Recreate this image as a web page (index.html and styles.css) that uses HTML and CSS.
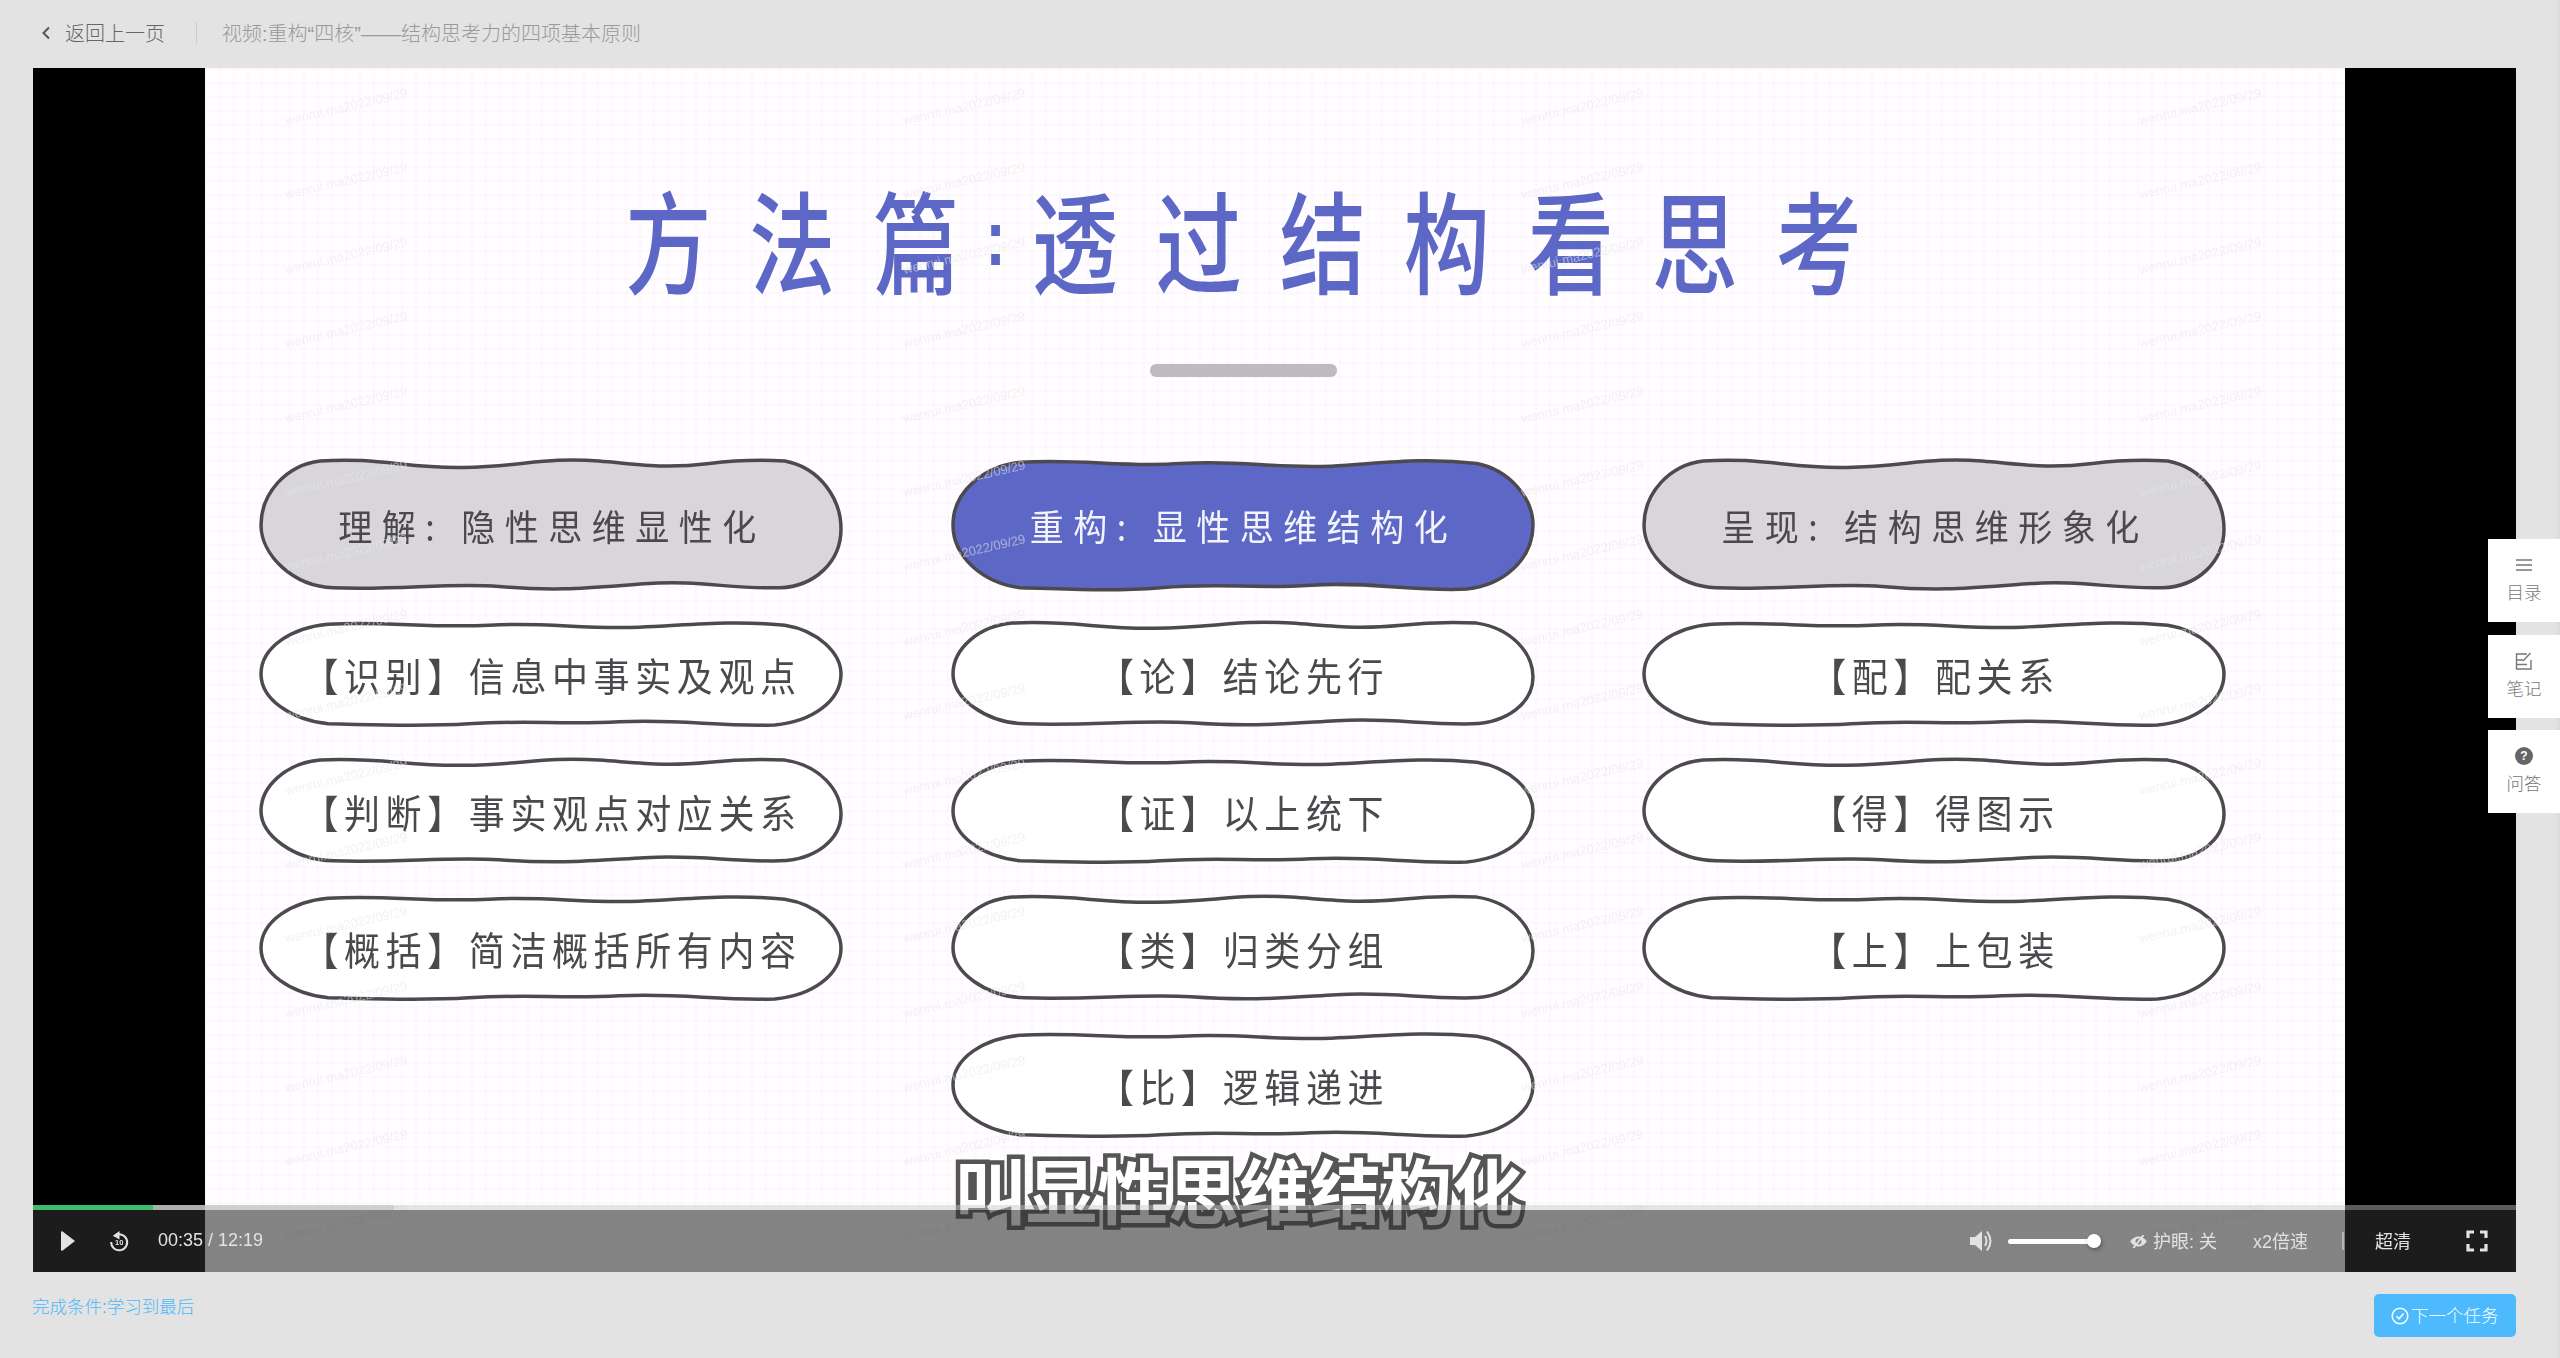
FILE: index.html
```html
<!DOCTYPE html>
<html lang="zh-CN">
<head>
    <meta charset="UTF-8">
    <title>视频:重构“四核”——结构思考力的四项基本原则</title>
    <link rel="stylesheet" href="styles.css">
</head>
<body>
    <svg class="defs" width="0" height="0">
        <symbol id="wave-a" viewBox="0 0 584 104" preserveAspectRatio="none">
            <path class="wave" d="M62 3C120 0 150 9 205 8C265 7 285 0 340 3C385 6 405 9 450 5C480 2 500 2 525 3C560 8 581 32 581 55C581 80 555 99 520 100C470 101 440 94 385 97C330 100 300 103 240 99C190 96 140 102 75 100C35 99 3 75 3 52C3 28 28 6 62 3Z"/>
        </symbol>
        <symbol id="wave-b" viewBox="0 0 584 104" preserveAspectRatio="none">
            <path class="wave" d="M70 4C130 1 170 8 230 5C290 2 320 9 380 7C430 5 470 0 525 5C558 10 581 32 581 52C581 78 552 98 515 101C460 103 420 95 360 98C300 101 270 96 210 100C160 103 120 101 70 100C32 96 3 76 3 52C3 26 34 7 70 4Z"/>
        </symbol>
    </svg>

    <header class="topbar">
        <a class="back">
            <svg class="back-arrow" viewBox="0 0 10 14"><path d="M8 1.5 2.5 7 8 12.5"/></svg>
            返回上一页
        </a>
        <span class="video-title">视频:重构“四核”——结构思考力的四项基本原则</span>
    </header>

    <main class="player">
        <div class="slide">
            <h1 class="slide-title"><span>方</span><span>法</span><span>篇</span><span class="colon">:</span><span>透</span><span>过</span><span>结</span><span>构</span><span>看</span><span>思</span><span>考</span></h1>
            <div class="slide-rule"></div>
            <div class="pills">
                <div class="pill pill-head"><svg><use href="#wave-a"/></svg><span>理解: 隐性思维显性化</span></div>
                <div class="pill pill-head pill-active"><svg><use href="#wave-b"/></svg><span>重构: 显性思维结构化</span></div>
                <div class="pill pill-head"><svg><use href="#wave-a"/></svg><span>呈现: 结构思维形象化</span></div>

                <div class="pill"><svg><use href="#wave-b"/></svg><span>【识别】信息中事实及观点</span></div>
                <div class="pill"><svg><use href="#wave-a"/></svg><span>【论】结论先行</span></div>
                <div class="pill"><svg><use href="#wave-b"/></svg><span>【配】配关系</span></div>

                <div class="pill"><svg><use href="#wave-a"/></svg><span>【判断】事实观点对应关系</span></div>
                <div class="pill"><svg><use href="#wave-b"/></svg><span>【证】以上统下</span></div>
                <div class="pill"><svg><use href="#wave-a"/></svg><span>【得】得图示</span></div>

                <div class="pill"><svg><use href="#wave-b"/></svg><span>【概括】简洁概括所有内容</span></div>
                <div class="pill"><svg><use href="#wave-a"/></svg><span>【类】归类分组</span></div>
                <div class="pill"><svg><use href="#wave-b"/></svg><span>【上】上包装</span></div>

                <div class="pill pill-mid"><svg><use href="#wave-b"/></svg><span>【比】逻辑递进</span></div>
            </div>
            <div class="watermarks" id="watermarks"></div>
            <div class="caption">叫显性思维结构化</div>
        </div>

        <div class="controls">
            <div class="progress">
                <div class="progress-buffer"></div>
                <div class="progress-played"></div>
            </div>
            <div class="ctrl-bar">
                <div class="ctrl-left">
                    <svg class="ic-play" viewBox="0 0 14 20"><path d="M0 1 1 0 14 10 1 20 0 19Z"/></svg>
                    <svg class="ic-replay" viewBox="0 0 20 20">
                        <path class="ic-line" d="M5 5.2A8 8 0 1 1 2.2 11"/>
                        <path d="M10.5 0 4 4.8 10.5 8.4Z"/>
                        <text x="10.2" y="14.4" class="ic-ten">10</text>
                    </svg>
                    <span class="time">00:35 / 12:19</span>
                </div>
                <div class="ctrl-right">
                    <svg class="ic-volume" viewBox="0 0 22 22">
                        <path d="M0 7H5L12 1V21L5 15H0Z"/>
                        <path class="ic-line" d="M15 6Q18 11 15 16"/>
                        <path class="ic-line" d="M17 1.5Q24 11 17 20.5"/>
                    </svg>
                    <div class="volume"><i class="volume-knob"></i></div>
                    <button class="ctrl-item eye">
                        <svg class="ic-eye" viewBox="0 0 18 14">
                            <path d="M0 7Q4 1.5 9 1.5T18 7Q14 12.5 9 12.5T0 7Z"/>
                            <circle class="ic-hole" cx="9" cy="7" r="3.2"/>
                            <path class="ic-cut" d="M14.5 0 3.5 14"/>
                        </svg>
                        护眼: 关
                    </button>
                    <button class="ctrl-item speed">x2倍速</button>
                    <i class="ctrl-sep"></i>
                    <button class="ctrl-item quality">超清</button>
                    <svg class="ic-full" viewBox="0 0 22 22"><path d="M2 8V2H8M14 2H20V8M20 14V20H14M8 20H2V14"/></svg>
                </div>
            </div>
        </div>
    </main>

    <footer class="foot">
        <span class="condition">完成条件:学习到最后</span>
        <button class="next">
            <svg class="ic-check" viewBox="0 0 18 18"><circle cx="9" cy="9" r="7.8"/><path d="M5.5 9.2 8 11.8 12.6 6.4"/></svg>
            下一个任务
        </button>
    </footer>

    <aside class="side">
        <a class="side-tab">
            <svg class="side-ic" viewBox="0 0 18 18"><path class="side-line" d="M1 4H17M1 9H17M1 14H17"/></svg>
            目录
        </a>
        <a class="side-tab">
            <svg class="side-ic" viewBox="0 0 18 18"><path class="side-line" d="M12 2H1.5V17H16V8M1.5 8H8M1.5 12.5H12M8 9 15.5 1"/></svg>
            笔记
        </a>
        <a class="side-tab">
            <svg class="side-ic" viewBox="0 0 18 18"><circle cx="9" cy="9" r="9"/><text x="9" y="13.2" class="side-q">?</text></svg>
            问答
        </a>
    </aside>

    <script>
        // the user's watermark is repeated over the whole video
        const marks = document.getElementById('watermarks');
        for (let i = 0; i < 64; i++) {
            const mark = document.createElement('span');
            mark.textContent = 'wenrui.ma2022/09/29';
            marks.appendChild(mark);
        }
    </script>
</body>
</html>
```

FILE: styles.css
```css
* {
    box-sizing: border-box;
}

html, body {
    margin: 0;
    height: 100%;
}

body {
    background-color: #e3e3e3;
    font-family: "Liberation Sans", "Noto Sans CJK SC", sans-serif;
    font-weight: 300;
    padding: 0 44px 0 33px;
    overflow: hidden;
    position: relative;
}

/* faint shade along the right edge of the window */
body::before {
    content: "";
    position: absolute;
    right: 0;
    top: 0;
    bottom: 0;
    width: 5px;
    background: linear-gradient(90deg, rgba(0, 0, 0, 0), rgba(0, 0, 0, 0.04));
}

.defs {
    position: absolute;
}

.wave {
    vector-effect: non-scaling-stroke;
}

/* top bar */
.topbar {
    height: 68px;
    display: flex;
    align-items: center;
    font-size: 20px;
    padding-bottom: 3px;
}

.back {
    display: flex;
    align-items: center;
    color: #666;
    padding-left: 8px;
    padding-right: 31px;
    border-right: 1px solid #ccc;
    height: 22px;
}

.back-arrow {
    width: 10px;
    height: 14px;
    margin-right: 14px;
    fill: none;
    stroke: #555;
    stroke-width: 2;
}

.video-title {
    color: #999;
    margin-left: 25px;
}

/* player */
.player {
    position: relative;
    height: 1204px;
    background-color: #000;
    padding: 0 171px 0 172px;
}

.slide {
    position: relative;
    height: 100%;
    padding: 110px 118px 0 55px;
    overflow: hidden;
    background-color: #fffdff;
    background-image:
        linear-gradient(rgba(240, 226, 240, 0.16) 2px, transparent 2px),
        linear-gradient(90deg, rgba(240, 226, 240, 0.16) 2px, transparent 2px);
    background-size: 14px 14px;
}

.slide-title {
    margin: 0;
    height: 120px;
    display: flex;
    justify-content: center;
    align-items: center;
    gap: 38px;
    font-family: "Noto Sans CJK SC", sans-serif;
    font-size: 86px;
    font-weight: 500;
    line-height: 120px;
    color: #5d68c6;
    filter: blur(0.7px);
}

.slide-title span {
    display: block;
    transform: scaleY(1.3);
}

.slide-title .colon {
    font-family: "Liberation Sans", sans-serif;
    font-weight: 700;
    font-size: 62px;
    margin: 0 -12px;
}

.slide-rule {
    width: 187px;
    height: 13px;
    margin: 66px auto 0;
    background-color: #bdbbbd;
    border-radius: 6px;
    filter: blur(0.7px);
}

.pills {
    margin-top: 82px;
    display: grid;
    grid-template-columns: repeat(3, 584px);
    grid-template-rows: 130px repeat(4, 104px);
    column-gap: 107.5px;
    row-gap: 33px;
    filter: blur(0.5px);
}

.pill {
    position: relative;
    height: 104px;
    display: flex;
    align-items: center;
    justify-content: center;
    fill: #fff;
    stroke: #4d4a4f;
    stroke-width: 3.5;
    font-family: "Noto Sans CJK SC", sans-serif;
    font-size: 36px;
    font-weight: 400;
    letter-spacing: 5.6px;
    color: #4b494d;
}

.pill svg {
    position: absolute;
    left: -2px;
    top: -2px;
    width: calc(100% + 2px);
    height: calc(100% + 4px);
}

.pill span {
    position: relative;
    transform: scaleY(1.08);
}

.pill-head {
    height: 132px;
    fill: #d8d6d9;
    font-size: 34px;
    letter-spacing: 9.5px;
}

.pill-active {
    fill: #5d68c6;
    color: #f3f3fb;
}

.pill-mid {
    grid-column: 2;
}

.watermarks {
    position: absolute;
    left: 0;
    top: 0;
    width: 100%;
    height: 100%;
    padding: 45px 0 0 82px;
    display: grid;
    grid-template-columns: repeat(4, 618px);
    grid-auto-rows: 74.4px;
    filter: blur(0.4px);
}

.watermarks span {
    display: block;
    height: 15px;
    font: 13px/15px "Liberation Sans", sans-serif;
    white-space: nowrap;
    color: rgba(232, 232, 232, 0.55);
    transform: rotate(-13deg);
    transform-origin: 0 100%;
}

.caption {
    position: absolute;
    left: 750px;
    top: 1074px;
    font-family: "Noto Sans CJK SC", sans-serif;
    font-size: 71px;
    font-weight: 700;
    line-height: 90px;
    white-space: nowrap;
    color: #fff;
    -webkit-text-stroke: 9px #555;
    paint-order: stroke fill;
    filter: blur(0.5px);
}

/* controls, they lie over the video */
.controls {
    position: absolute;
    left: 0;
    right: 0;
    bottom: 0;
}

.progress {
    position: relative;
    height: 5px;
    background-color: rgba(198, 198, 198, 0.46);
}

.progress-buffer {
    position: absolute;
    left: 0;
    top: 0;
    bottom: 0;
    width: 361px;
    background-color: rgba(200, 200, 200, 0.76);
}

.progress-played {
    position: absolute;
    left: 0;
    top: 0;
    bottom: 0;
    width: 120px;
    background-color: #3ebb6d;
}

.ctrl-bar {
    height: 62px;
    display: flex;
    justify-content: space-between;
    align-items: center;
    background-color: rgba(47, 47, 47, 0.59);
    color: #e2e2e2;
    font-size: 18px;
    font-weight: 400;
    padding: 0 28px;
}

.ctrl-left, .ctrl-right {
    display: flex;
    align-items: center;
}

.ic-play {
    width: 14px;
    height: 20px;
    fill: #e2e2e2;
}

.ic-replay {
    width: 20px;
    height: 20px;
    margin-left: 34px;
    fill: #e2e2e2;
    overflow: visible;
}

.ic-line {
    fill: none;
    stroke: #e2e2e2;
    stroke-width: 2;
}

.ic-ten {
    font: 700 7.5px "Liberation Sans", sans-serif;
    text-anchor: middle;
}

.time {
    margin-left: 29px;
    padding-bottom: 2px;
}

.ic-volume {
    width: 22px;
    height: 22px;
    fill: #e2e2e2;
}

.volume {
    position: relative;
    width: 91px;
    height: 5px;
    margin-left: 16px;
    background-color: #fff;
    border-radius: 3px;
}

.volume-knob {
    position: absolute;
    right: -2px;
    top: -4.5px;
    width: 14px;
    height: 14px;
    border-radius: 50%;
    background-color: #fff;
    box-shadow: 1px 2px 4px rgba(0, 0, 0, 0.35);
}

.ctrl-item {
    display: flex;
    align-items: center;
    border: 0;
    padding: 0 0 3px;
    background: none;
    font: inherit;
    color: inherit;
    white-space: nowrap;
}

.eye {
    margin-left: 31px;
}

.ic-eye {
    width: 17px;
    height: 13px;
    margin-top: 3px;
    margin-right: 6px;
    fill: #e2e2e2;
}

.ic-hole {
    fill: #858585;
}

.ic-cut {
    fill: none;
    stroke: #e2e2e2;
    stroke-width: 2;
}

.speed {
    margin-left: 36px;
}

.ctrl-sep {
    width: 2px;
    height: 18px;
    margin-left: 34px;
    background-color: rgba(255, 255, 255, 0.4);
}

.quality {
    margin-left: 31px;
}

.ic-full {
    width: 22px;
    height: 22px;
    margin-left: 55px;
    fill: none;
    stroke: #e2e2e2;
    stroke-width: 3.2;
}

/* footer */
.foot {
    display: flex;
    justify-content: space-between;
    padding-top: 22px;
}

.condition {
    color: #4cb9fc;
    font-size: 17.5px;
    line-height: 26px;
    margin-left: -1px;
}

.next {
    display: flex;
    align-items: center;
    height: 43px;
    width: 142px;
    padding: 0 0 3px 17px;
    border: 0;
    border-radius: 5px;
    background-color: #4cbafd;
    color: #fff;
    font-family: inherit;
    font-size: 17.5px;
    font-weight: 300;
}

.ic-check {
    width: 18px;
    height: 18px;
    margin-top: 3px;
    margin-right: 2px;
    fill: none;
    stroke: #fff;
    stroke-width: 1.5;
}

/* side tabs, fixed over the right edge */
.side {
    position: absolute;
    right: 0;
    top: 539px;
    display: flex;
    flex-direction: column;
    gap: 12.5px;
}

.side-tab {
    width: 72px;
    height: 83px;
    display: flex;
    flex-direction: column;
    align-items: center;
    padding-top: 17px;
    gap: 7px;
    background-color: #fff;
    color: #777;
    font-size: 17.5px;
    line-height: 24px;
}

.side-ic {
    width: 18px;
    height: 18px;
    fill: #666;
}

.side-line {
    fill: none;
    stroke: #777;
    stroke-width: 1.4;
}

.side-q {
    font: 700 12px "Liberation Sans", sans-serif;
    fill: #fff;
    text-anchor: middle;
}
```
